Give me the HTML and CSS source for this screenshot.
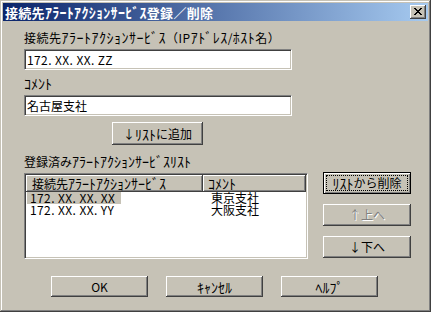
FILE: index.html
```html
<!DOCTYPE html>
<html lang="ja">
<head>
<meta charset="utf-8">
<title>接続先ｱﾗｰﾄｱｸｼｮﾝｻｰﾋﾞｽ登録／削除</title>
<link rel="stylesheet" href="styles.css">
</head>
<body>
<div class="window">
  <div class="titlebar">
    <span class="title">接続先<span class="k">ｱﾗｰﾄｱｸｼｮﾝｻｰﾋﾞｽ</span>登録／削除</span>
    <span class="close"><svg width="8" height="7" viewBox="0 0 8 7" shape-rendering="crispEdges"><path d="M0 0h2v1h-2zM6 0h2v1h-2zM1 1h2v1h-2zM5 1h2v1h-2zM2 2h4v1h-4zM3 3h2v1h-2zM2 4h4v1h-4zM1 5h2v1h-2zM5 5h2v1h-2zM0 6h2v1h-2zM6 6h2v1h-2z" fill="#000"/></svg></span>
  </div>
  <div class="content">
    <div class="label first">接続先<span class="k">ｱﾗｰﾄｱｸｼｮﾝｻｰﾋﾞｽ</span>（IP<span class="k">ｱﾄﾞﾚｽ</span>/<span class="k">ﾎｽﾄ</span>名）</div>
    <div class="field latin">172. XX. XX. ZZ</div>
    <div class="label"><span class="k">ｺﾒﾝﾄ</span></div>
    <div class="field">名古屋支社</div>
    <button class="btn add">↓<span class="k">ﾘｽﾄ</span>に追加</button>
    <div class="label list-label">登録済み<span class="k">ｱﾗｰﾄｱｸｼｮﾝｻｰﾋﾞｽﾘｽﾄ</span></div>
    <div class="listrow">
      <div class="listview">
        <div class="lvhead">
          <div class="hcell c1">接続先<span class="k">ｱﾗｰﾄｱｸｼｮﾝｻｰﾋﾞｽ</span></div>
          <div class="hcell c2"><span class="k">ｺﾒﾝﾄ</span></div>
        </div>
        <div class="lvrow">
          <div class="cell c1"><span class="sel latin">172. XX. XX. XX</span></div>
          <div class="cell c2">東京支社</div>
        </div>
        <div class="lvrow">
          <div class="cell c1"><span class="nosel latin">172. XX. XX. YY</span></div>
          <div class="cell c2">大阪支社</div>
        </div>
      </div>
      <div class="sidebtns">
        <button class="btn side default"><span class="focus"><span class="k">ﾘｽﾄ</span>から削除</span></button>
        <button class="btn side disabled">↑上へ</button>
        <button class="btn side">↓下へ</button>
      </div>
    </div>
    <div class="bottom">
      <button class="btn wide">OK</button>
      <button class="btn wide"><span class="k">ｷｬﾝｾﾙ</span></button>
      <button class="btn wide"><span class="k">ﾍﾙﾌﾟ</span></button>
    </div>
  </div>
</div>
</body>
</html>
```
FILE: styles.css
```css
* { box-sizing: border-box; margin: 0; padding: 0; }
html, body { width: 431px; height: 312px; overflow: hidden; }
body {
  background: #C6C2B6;
  font-family: "Noto Sans CJK JP", "Noto Sans", sans-serif;
  font-size: 12px;
  color: #000;
}
.k { font-size: 14px; }
.latin { letter-spacing: 0.4px; }
.window {
  width: 431px;
  height: 312px;
  padding: 3px;
  background: #C6C2B6;
  box-shadow: inset -1px -1px #404040, inset 1px 1px #C6C2B6, inset -2px -2px #808080, inset 2px 2px #ffffff;
  display: flex;
  flex-direction: column;
}
.titlebar {
  height: 18px;
  background: linear-gradient(to right, #0A246A, #A6CAF0);
  display: flex;
  align-items: center;
  justify-content: space-between;
  padding: 0 2px 0 2px;
}
.title {
  color: #fff;
  font-weight: bold;
  font-size: 13px;
  line-height: 18px;
  white-space: nowrap;
  letter-spacing: 0.3px;
}
.title .k { font-size: 14px; }
.close {
  width: 16px;
  height: 14px;
  background: #C6C2B6;
  box-shadow: inset -1px -1px #404040, inset 1px 1px #ffffff, inset -2px -2px #808080;
  display: flex;
  align-items: center;
  justify-content: center;
  padding-bottom: 1px;
}
.close svg { display: block; }
.content {
  display: flex;
  flex-direction: column;
  align-items: flex-start;
  padding: 9px 0 0 21px;
}
.label {
  height: 14px;
  line-height: 14px;
  white-space: nowrap;
  margin-top: 6px;
}
.label.first { margin-top: 0; letter-spacing: 0.5px; }
.label.list-label { margin-top: 9px; }
.field {
  margin-top: 5px;
  width: 268px;
  height: 21px;
  background: #fff;
  border-top: 1px solid #808080;
  border-left: 1px solid #808080;
  border-bottom: 1px solid #fff;
  border-right: 1px solid #fff;
  box-shadow: inset 1px 1px #404040, inset -1px -1px #C6C2B6;
  padding: 0 2px;
  line-height: 19px;
  white-space: nowrap;
}
.btn {
  font: inherit;
  color: #000;
  background: #C6C2B6;
  border: none;
  box-shadow: inset -1px -1px #404040, inset 1px 1px #ffffff, inset -2px -2px #808080;
  display: flex;
  align-items: center;
  justify-content: center;
  line-height: 14px;
  white-space: nowrap;
}
.btn.add {
  margin-top: 6px;
  margin-left: 88px;
  width: 91px;
  height: 23px;
}
.listrow {
  margin-top: 4px;
  display: flex;
  align-items: flex-start;
}
.listview {
  margin-top: 1px;
  width: 284px;
  height: 86px;
  background: #fff;
  border-top: 1px solid #808080;
  border-left: 1px solid #808080;
  border-bottom: 1px solid #fff;
  border-right: 1px solid #fff;
  box-shadow: inset 1px 1px #404040, inset -1px -1px #C6C2B6;
  padding: 1px;
}
.lvhead {
  display: flex;
  height: 17px;
}
.hcell {
  background: #C6C2B6;
  box-shadow: inset -1px -1px #404040, inset 1px 1px #ffffff, inset -2px -2px #808080;
  line-height: 16px;
  white-space: nowrap;
}
.hcell.c1 { width: 177px; padding-left: 6px; }
.hcell.c2 { flex: 1; padding-left: 5px; }
.lvrow {
  display: flex;
  height: 12px;
  line-height: 12px;
  white-space: nowrap;
}
.cell.c1 { width: 177px; padding-left: 1px; }
.cell.c2 { flex: 1; padding-left: 8px; }
.sel, .nosel {
  display: inline-block;
  padding: 0 2px 0 3px;
  height: 12px;
}
.sel { background: #C6C2B6; width: 94px; }
.sidebtns {
  margin-left: 15px;
  display: flex;
  flex-direction: column;
  gap: 10px;
}
.btn.side { width: 88px; height: 22px; }
.btn.default {
  border: 1px solid #000;
  box-shadow: inset 1px 1px #ffffff, inset -1px -1px #808080;
  padding: 2px;
}
.focus {
  display: flex;
  align-items: center;
  justify-content: center;
  width: 100%;
  height: 100%;
  border: 1px dotted #000;
}
.btn.disabled {
  color: #808080;
  text-shadow: 1px 1px #ffffff;
}
.bottom {
  margin-top: 17px;
  padding-left: 27px;
  display: flex;
  gap: 18px;
}
.btn.wide { width: 97px; height: 21px; }
```
